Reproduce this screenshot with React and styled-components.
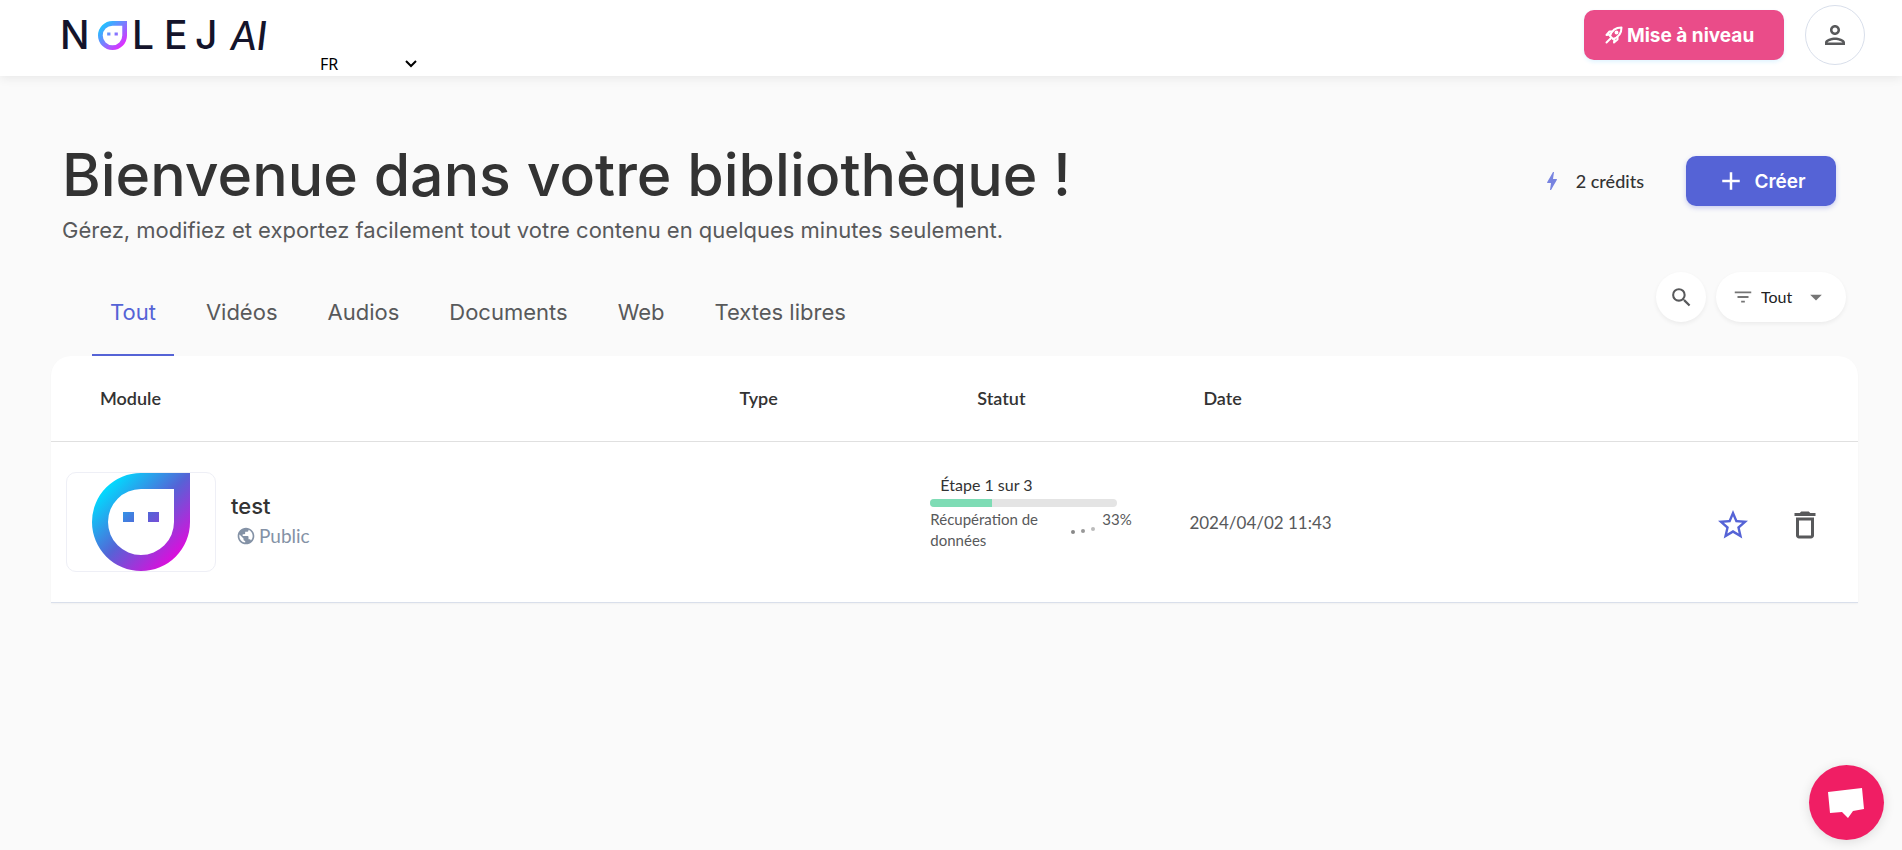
import React, { useState } from 'react'
import styled, { createGlobalStyle, css } from 'styled-components'
import {
  MdOutlinePerson,
  MdAdd,
  MdBolt,
  MdSearch,
  MdFilterList,
  MdArrowDropDown,
  MdPublic,
  MdStarOutline,
  MdDeleteOutline,
} from 'react-icons/md'

const TABS = ['Tout', 'Vidéos', 'Audios', 'Documents', 'Web', 'Textes libres']

const MODULES = [
  {
    id: 1,
    name: 'test',
    visibility: 'Public',
    step: 'Étape 1 sur 3',
    progress: 33,
    task: 'Récupération de données',
    date: '2024/04/02 11:43',
  },
]

const Drop = ({ id, from, middle, to, ...props }) => (
  <svg viewBox="0 0 98 98" aria-hidden="true" {...props}>
    <defs>
      <linearGradient id={id} gradientUnits="userSpaceOnUse" x1="14" y1="14" x2="84" y2="84">
        <stop offset="0" stopColor={from} />
        <stop offset="0.5" stopColor={middle} />
        <stop offset="1" stopColor={to} />
      </linearGradient>
    </defs>
    <path
      fill={`url(#${id})`}
      fillRule="evenodd"
      d="M49 0H98V49A49 49 0 1 1 49 0ZM49 16A33 33 0 1 0 82 49V16ZM31 39H42V49H31ZM56 39H67V49H56Z"
    />
  </svg>
)

const Rocket = () => (
  <svg width="18" height="18" viewBox="0 0 18 18" fill="none" stroke="#fff" strokeWidth="2" strokeLinejoin="round" aria-hidden="true">
    <path d="M5 10C6.500 5 10 1.500 16.500 1.500C16.500 8 13 11.500 8 13Z" />
    <path d="M5.500 8.500L1.500 9L4.500 5.500H7.500M9.500 12.500L9 16.500L12.500 13.500V10.500" />
    <path d="M1.500 16.500L5.500 12.500" strokeLinecap="round" />
    <circle cx="11.500" cy="6.500" r="1" />
  </svg>
)

const ModuleRow = ({ module }) => (
  <tr>
    <Cell $indent={15}>
      <ModuleInfo>
        <Thumbnail>
          <Drop id={`drop-${module.id}`} from="#00dcff" middle="#5563d6" to="#dc0edc" width="98" height="98" />
        </Thumbnail>
        <div>
          <ModuleName>{module.name}</ModuleName>
          <Visibility>
            <MdPublic size={20} />
            {module.visibility}
          </Visibility>
        </div>
      </ModuleInfo>
    </Cell>
    <Cell />
    <Cell $indent={12}>
      <Status>
        <StepLabel>{module.step}</StepLabel>
        <ProgressTrack>
          <ProgressFill style={{ width: `${module.progress}%` }} />
        </ProgressTrack>
        <TaskLine>
          <TaskName>{module.task}</TaskName>
          <Dots width="24" height="10" viewBox="0 0 24 10" aria-hidden="true">
            <circle cx="2" cy="7" r="2" fill="#888" />
            <circle cx="12" cy="6" r="2" fill="#999" />
            <circle cx="22" cy="4" r="2" fill="#bbb" />
          </Dots>
          <span>{module.progress}%</span>
        </TaskLine>
      </Status>
    </Cell>
    <Cell>
      <DateText>{module.date}</DateText>
    </Cell>
    <Cell>
      <Actions>
        <IconButton $color="#5563d6" aria-label="Ajouter aux favoris">
          <MdStarOutline size={36} />
        </IconButton>
        <IconButton $color="#58595b" aria-label="Supprimer">
          <MdDeleteOutline size={36} />
        </IconButton>
      </Actions>
    </Cell>
  </tr>
)

const App = () => {
  const [activeTab, setActiveTab] = useState('Tout')

  return (
    <>
      <GlobalStyle />
      <Header>
        <Logo href="#" aria-label="Nolej AI">
          <span>N</span>
          <Drop id="logo-drop" from="#1fc3ff" middle="#7c7cff" to="#e22bff" width="29" height="29" />
          <span>L</span>
          <span>E</span>
          <span>J</span>
          <LogoSuffix>AI</LogoSuffix>
        </Logo>
        <LanguagePicker>
          <LanguageSelect aria-label="Langue" defaultValue="FR">
            <option>FR</option>
            <option>EN</option>
          </LanguageSelect>
          <svg width="12" height="8" viewBox="0 0 12 8" fill="none" stroke="#000" strokeWidth="2" aria-hidden="true">
            <path d="M1 1L6 6L11 1" />
          </svg>
        </LanguagePicker>
        <HeaderActions>
          <UpgradeButton>
            <Rocket />
            Mise à niveau
          </UpgradeButton>
          <ProfileButton aria-label="Profil">
            <MdOutlinePerson size={30} />
          </ProfileButton>
        </HeaderActions>
      </Header>

      <Main>
        <Intro>
          <div>
            <Title>Bienvenue dans votre bibliothèque !</Title>
            <Subtitle>
              Gérez, modifiez et exportez facilement tout votre contenu en quelques minutes seulement.
            </Subtitle>
          </div>
          <IntroActions>
            <Credits>
              <MdBolt size={24} />
              <span>2 crédits</span>
            </Credits>
            <CreateButton>
              <MdAdd size={30} />
              Créer
            </CreateButton>
          </IntroActions>
        </Intro>

        <Toolbar>
          <Tabs role="tablist">
            {TABS.map((tab) => (
              <Tab
                key={tab}
                role="tab"
                aria-selected={tab === activeTab}
                $active={tab === activeTab}
                onClick={() => setActiveTab(tab)}
              >
                {tab}
              </Tab>
            ))}
          </Tabs>
          <Filters>
            <SearchButton aria-label="Rechercher">
              <MdSearch size={25} />
            </SearchButton>
            <FilterPill>
              <MdFilterList size={22} />
              <FilterSelect aria-label="Filtrer" defaultValue="Tout">
                <option>Tout</option>
                <option>Public</option>
                <option>Privé</option>
              </FilterSelect>
              <MdArrowDropDown size={28} />
            </FilterPill>
          </Filters>
        </Toolbar>

        <ModuleTable>
          <colgroup>
            <Column $width="36%" />
            <Column $width="12%" />
            <Column $width="15%" />
            <Column $width="13%" />
            <Column $width="24%" />
          </colgroup>
          <thead>
            <tr>
              <HeadCell $indent={49}>Module</HeadCell>
              <HeadCell $indent={38}>Type</HeadCell>
              <HeadCell $indent={59}>Statut</HeadCell>
              <HeadCell $indent={14}>Date</HeadCell>
              <HeadCell />
            </tr>
          </thead>
          <tbody>
            {MODULES.map((module) => (
              <ModuleRow key={module.id} module={module} />
            ))}
          </tbody>
        </ModuleTable>
      </Main>

      <ChatButton aria-label="Ouvrir le chat">
        <svg width="38" height="32" viewBox="0 0 38 32" aria-hidden="true">
          <path fill="#fff" d="M0 5L34 1L36 22L25 24L20 31L14 25L2 26Z" />
        </svg>
      </ChatButton>
    </>
  )
}

const GlobalStyle = createGlobalStyle`
  * {
    box-sizing: border-box;
  }

  body {
    margin: 0;
    background-color: #fafafa;
    color: #333;
    font-family: Lato, sans-serif;
  }

  button,
  select {
    font-family: inherit;
    color: inherit;
    border: none;
    cursor: pointer;
  }
`

const heading = css`
  font-family: Inter, sans-serif;
`

const Header = styled.header`
  display: flex;
  align-items: flex-start;
  height: 76px;
  padding: 5px 37px 0 60px;
  background-color: #fff;
  box-shadow: 0 2px 10px rgba(0, 0, 0, 0.08);
`

const Logo = styled.a`
  ${heading}
  display: grid;
  grid-template-columns: 38px 34px 32px 31px 36px 48px;
  align-items: center;
  height: 60px;
  color: #14142b;
  font-size: 39px;
  font-weight: 500;
  line-height: 60px;
  text-decoration: none;
`

const LogoSuffix = styled.span`
  font-family: Lato, sans-serif;
  font-size: 40px;
  font-style: italic;
`

const LanguagePicker = styled.div`
  display: flex;
  align-items: center;
  align-self: flex-end;
  width: 100px;
  margin-left: 38px;

  svg {
    margin-left: -16px;
    pointer-events: none;
  }
`

const LanguageSelect = styled.select`
  appearance: none;
  flex: 1;
  height: 24px;
  padding: 0 3px;
  background: transparent;
  color: #000;
  font-family: 'Noto Sans', sans-serif;
  font-size: 16px;
  line-height: 24px;
`

const HeaderActions = styled.div`
  display: flex;
  align-items: center;
  gap: 21px;
  margin-left: auto;
`

const UpgradeButton = styled.button`
  ${heading}
  display: flex;
  align-items: center;
  gap: 4px;
  width: 200px;
  height: 50px;
  padding: 0 21px;
  border-radius: 10px;
  background-color: #ea4c89;
  box-shadow: 0 2px 4px rgba(0, 163, 255, 0.12);
  color: #fff;
  font-size: 19px;
  font-weight: 700;
  white-space: nowrap;
`

const ProfileButton = styled.button`
  display: flex;
  align-items: center;
  justify-content: center;
  width: 60px;
  height: 60px;
  border: 1px solid #d9dfeb;
  border-radius: 50%;
  background-color: #fff;
  color: #58595b;
`

const Main = styled.main`
  padding: 66px 44px 40px 51px;
`

const Intro = styled.section`
  display: flex;
  align-items: flex-start;
  justify-content: space-between;
  padding: 0 22px 0 11px;
`

const Title = styled.h1`
  ${heading}
  margin: 0;
  font-size: 59px;
  font-weight: 500;
  line-height: 66px;
`

const Subtitle = styled.p`
  ${heading}
  margin: 8px 0 0;
  color: #58595b;
  font-size: 22px;
  line-height: 28px;
`

const IntroActions = styled.div`
  display: flex;
  align-items: center;
  gap: 42px;
  padding-top: 14px;
`

const Credits = styled.div`
  display: flex;
  align-items: center;
  gap: 12px;
  font-size: 18px;
  font-weight: 500;
  white-space: nowrap;

  svg {
    color: #7783e0;
  }
`

const CreateButton = styled.button`
  ${heading}
  display: flex;
  align-items: center;
  justify-content: center;
  gap: 8px;
  width: 150px;
  height: 50px;
  border-radius: 10px;
  background-color: #5563d6;
  box-shadow: 0 2px 5px rgba(85, 99, 214, 0.3);
  color: #fff;
  font-size: 19px;
  font-weight: 600;
`

const Toolbar = styled.div`
  display: flex;
  justify-content: space-between;
  margin-top: 28px;
  padding: 0 12px 0 41px;
`

const Tabs = styled.div`
  display: flex;
  gap: 14px;
  height: 84px;
`

const Tab = styled.button`
  ${heading}
  padding: 0 18px 3px;
  border-bottom: 2px solid ${({ $active }) => ($active ? '#5563d6' : 'transparent')};
  background: transparent;
  color: ${({ $active }) => ($active ? '#5563d6' : '#58595b')};
  font-size: 22px;
  line-height: 24px;
`

const Filters = styled.div`
  display: flex;
  gap: 10px;
`

const SearchButton = styled.button`
  display: flex;
  align-items: center;
  justify-content: center;
  width: 50px;
  height: 50px;
  border-radius: 50%;
  background-color: #fff;
  box-shadow: 0 2px 4px rgba(0, 0, 0, 0.06);
  color: #58595b;
`

const FilterPill = styled.div`
  display: flex;
  align-items: center;
  width: 130px;
  height: 50px;
  padding: 0 16px;
  border-radius: 25px;
  background-color: #fff;
  box-shadow: 0 2px 4px rgba(0, 0, 0, 0.06);

  svg {
    flex-shrink: 0;
    color: #757575;
  }
`

const FilterSelect = styled.select`
  appearance: none;
  flex: 1;
  min-width: 0;
  padding: 0 0 0 7px;
  background: transparent;
  color: #222;
  font-size: 16px;
  line-height: 24px;
`

const ModuleTable = styled.table`
  width: 100%;
  table-layout: fixed;
  border-collapse: separate;
  border-spacing: 0;
  border-radius: 20px 20px 0 0;
  background-color: #fff;
  box-shadow: 0 1px 2px rgba(0, 0, 0, 0.04);
`

const Column = styled.col`
  width: ${({ $width }) => $width};
`

const HeadCell = styled.th`
  height: 86px;
  padding: 0 0 2px ${({ $indent = 0 }) => $indent}px;
  border-bottom: 1px solid #e0e0e0;
  font-size: 18px;
  font-weight: 600;
  text-align: left;
`

const Cell = styled.td`
  height: 161px;
  padding: 0 0 0 ${({ $indent = 0 }) => $indent}px;
  border-bottom: 1px solid #d9dfeb;
`

const ModuleInfo = styled.div`
  display: flex;
  align-items: center;
  gap: 15px;
`

const Thumbnail = styled.div`
  display: flex;
  justify-content: center;
  width: 150px;
  height: 100px;
  border: 1px solid #eeeff6;
  border-radius: 10px;
`

const ModuleName = styled.div`
  ${heading}
  font-size: 22px;
  font-weight: 500;
  line-height: 30px;
`

const Visibility = styled.div`
  display: flex;
  align-items: center;
  gap: 3px;
  padding: 0 0 2px 5px;
  color: #8492a6;
  font-size: 19px;
  line-height: 30px;
`

const Status = styled.div`
  width: 202px;
  padding-bottom: 20px;
  color: #58595b;
  font-size: 15px;
  line-height: 21px;
`

const StepLabel = styled.div`
  padding-left: 10px;
  color: #333;
  font-size: 16px;
  line-height: 24px;
`

const ProgressTrack = styled.div`
  width: 187px;
  height: 8px;
  margin: 2px 0;
  border-radius: 4px;
  background-color: #e4e4e4;
  overflow: hidden;
`

const ProgressFill = styled.div`
  height: 100%;
  background-color: #7edcb5;
`

const TaskLine = styled.div`
  display: flex;
  align-items: flex-start;
`

const TaskName = styled.span`
  width: 141px;
  padding-right: 20px;
`

const Dots = styled.svg`
  align-self: center;
  flex-shrink: 0;
  margin-right: 7px;
`

const DateText = styled.time`
  color: #58595b;
  font-size: 17px;
`

const Actions = styled.div`
  display: flex;
  justify-content: flex-end;
  gap: 36px;
  padding: 6px 35px 0 0;
`

const IconButton = styled.button`
  display: flex;
  padding: 0;
  background: transparent;
  color: ${({ $color }) => $color};
`

const ChatButton = styled.button`
  position: fixed;
  right: 18px;
  bottom: 10px;
  display: flex;
  align-items: center;
  justify-content: center;
  width: 75px;
  height: 75px;
  border-radius: 50%;
  background-color: #f01e64;
  box-shadow: 0 2px 12px rgba(0, 0, 0, 0.12);
`

export default App
